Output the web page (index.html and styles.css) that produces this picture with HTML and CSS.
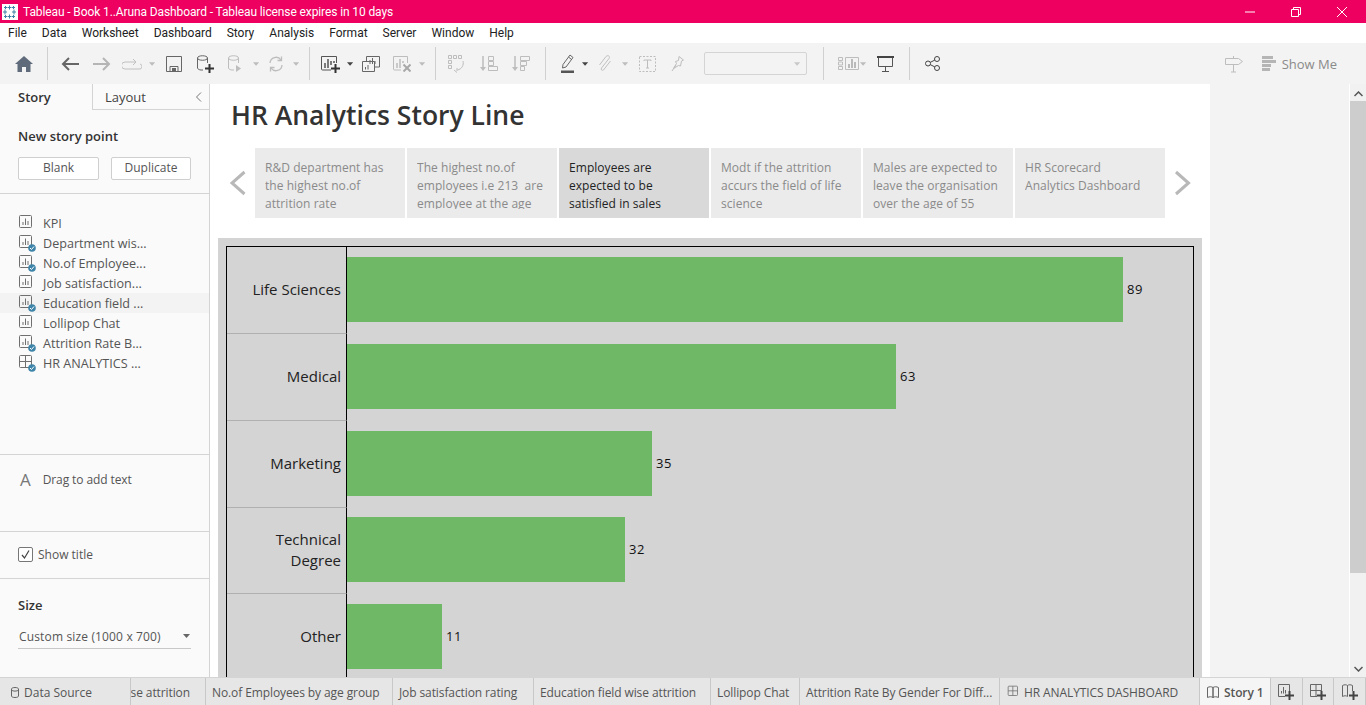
FILE: index.html
```html
<!DOCTYPE html>
<html lang="en">
<head>
    <meta charset="UTF-8">
    <title>Tableau - Book 1..Aruna Dashboard</title>
    <link rel="stylesheet" href="styles.css">
</head>
<body>
    <svg class="defs" width="0" height="0">
        <symbol id="sheet" viewBox="0 0 18 18">
            <rect x="1.5" y="1.5" width="12" height="12" rx="1" fill="none" stroke="#6f6f6f"/>
            <path d="M5 11V8M7.5 11V4.5M10 11V7" stroke="#6f6f6f" fill="none"/>
        </symbol>
        <symbol id="badge" viewBox="0 0 18 18">
            <circle cx="14" cy="14" r="3.800" fill="#3d84a8"/>
            <path d="M12 14l1.500 1.500L16 12.500" stroke="#fff" fill="none"/>
        </symbol>
        <symbol id="dash" viewBox="0 0 18 18">
            <rect x="1.5" y="1.5" width="12" height="12" rx="1" fill="none" stroke="#6f6f6f"/>
            <path d="M1.5 7.5h12M7.5 1.5v12" stroke="#6f6f6f" fill="none"/>
        </symbol>
        <symbol id="drop" viewBox="0 0 8 4">
            <path d="M0 0h7L3.5 4z"/>
        </symbol>
        <symbol id="plus" viewBox="0 0 9 9">
            <path d="M3.5 0h2v3.500h3.500v2H5.500V9h-2V5.500H0v-2h3.500z"/>
        </symbol>
    </svg>

    <header class="titlebar">
        <svg class="logo" width="16" height="16" viewBox="0 0 16 16">
            <rect width="16" height="16" fill="#fff"/>
            <path d="M7.500 1.500v4M5.500 3.500h4M7.500 10.500v4M5.500 12.500h4M3 5.500v5M1 8h4M12 5.500v5M10 8h4M3.500 2v3M2 3.500h3M11.500 2v3M10 3.500h3M3.500 11v3M2 12.500h3M11.500 11v3M10 12.500h3" stroke="#3f7ea6" fill="none"/>
        </svg>
        <span class="titlebar-text">Tableau - Book 1..Aruna Dashboard - Tableau license expires in 10 days</span>
        <div class="window-btns">
            <svg width="12" height="12" viewBox="0 0 12 12"><path d="M1 6h10" stroke="#fff"/></svg>
            <svg width="12" height="12" viewBox="0 0 12 12"><path d="M1.500 3.500h7v7h-7zM3.500 3.500v-2h7v7h-2" stroke="#fff" fill="none"/></svg>
            <svg width="12" height="12" viewBox="0 0 12 12"><path d="M1 1l10 10M11 1L1 11" stroke="#fff" fill="none"/></svg>
        </div>
    </header>

    <nav class="menubar">
        <span>File</span><span>Data</span><span>Worksheet</span><span>Dashboard</span><span>Story</span><span>Analysis</span><span>Format</span><span>Server</span><span>Window</span><span>Help</span>
    </nav>

    <div class="toolbar">
        <div class="tool w32"><svg width="18" height="16" viewBox="0 0 18 16"><path d="M9 0L0 8h2.500v8h4.500v-5h4v5h4.500V8H18z" fill="#5f6b7a"/></svg></div>
        <div class="sep"></div>
        <div class="tool w32"><svg width="18" height="14" viewBox="0 0 18 14"><path d="M8 1L2 7l6 6M2 7h16" stroke="#666" stroke-width="2" fill="none"/></svg></div>
        <div class="tool w32"><svg width="18" height="14" viewBox="0 0 18 14"><path d="M10 1l6 6-6 6M16 7H0" stroke="#b5b5b5" stroke-width="2" fill="none"/></svg></div>
        <div class="tool w28"><svg width="20" height="12" viewBox="0 0 20 12"><path d="M13 4H3a2.500 2.500 0 0 0 0 7h14a2.500 2.500 0 0 0 1-5M11 1l3 3-3 3" stroke="#c0c0c0" fill="none"/></svg></div>
        <div class="tool w12 dd off"><svg width="7" height="4"><use href="#drop"/></svg></div>
        <div class="tool w32"><svg width="16" height="16" viewBox="0 0 16 16"><path d="M.5.500h15v15H.5zM4 15.500v-5h8v5" stroke="#666" fill="none"/><path d="M6 12h4v3H6z" fill="#666"/></svg></div>
        <div class="tool w30"><svg width="18" height="18" viewBox="0 0 18 18"><path d="M1.500 3v10c0 1 2 2 3.500 2h2M11.500 3v5M1.500 3c0-3 10-3 10 0s-10 3-10 0z" stroke="#666" fill="none"/><use href="#plus" x="9" y="9" width="9" height="9" fill="#333"/></svg></div>
        <div class="tool w30"><svg width="16" height="18" viewBox="0 0 16 18"><path d="M1.500 3v10c0 1 2 2 3.500 2h2M11.500 3v5M1.500 3c0-3 10-3 10 0s-10 3-10 0z" stroke="#bdbdbd" fill="none"/><path d="M9 10l5 3.500L9 17z" fill="#bdbdbd"/></svg></div>
        <div class="tool w12 dd off"><svg width="7" height="4"><use href="#drop"/></svg></div>
        <div class="tool w28"><svg width="16" height="16" viewBox="0 0 16 16"><path d="M2 7a6 6 0 0 1 11-3M14 9a6 6 0 0 1-11 3M13.500.500v4h-4M2.500 15.500v-4h4" stroke="#bdbdbd" stroke-width="1.300" fill="none"/></svg></div>
        <div class="tool w12 dd off"><svg width="7" height="4"><use href="#drop"/></svg></div>
        <div class="sep"></div>
        <div class="tool w30"><svg width="20" height="18" viewBox="0 0 20 18"><path d="M10 15H1.500a1 1 0 0 1-1-1V1.500h15V8" stroke="#555" fill="none"/><path d="M4 13V8M7 13V4M10 10V6M13 8V6" stroke="#555" stroke-width="1.500"/><use href="#plus" x="10" y="9" width="9" height="9" fill="#333"/></svg></div>
        <div class="tool w8 dd"><svg width="7" height="4"><use href="#drop"/></svg></div>
        <div class="tool w34"><svg width="18" height="16" viewBox="0 0 18 16"><path d="M4.500 5V.500h13V11H13M.5 5.500h12v10H.5zM8 8V4M10.500 8V2M13 8V5M3.500 13.500V11M6 13.500V9" stroke="#666" fill="none"/></svg></div>
        <div class="tool w28"><svg width="18" height="17" viewBox="0 0 18 17"><path d="M8 15H1.500a1 1 0 0 1-1-1V1.500h14V8" stroke="#bdbdbd" fill="none"/><path d="M4 13V8M7 13V4M10 8V6" stroke="#bdbdbd" stroke-width="1.500"/><path d="M10.500 9.500l7 7M17.500 9.500l-7 7" stroke="#a8a8a8" stroke-width="2"/></svg></div>
        <div class="tool w12 dd off"><svg width="7" height="4"><use href="#drop"/></svg></div>
        <div class="sep"></div>
        <div class="tool w30"><svg width="18" height="18" viewBox="0 0 18 18"><path d="M.5.500h3v3h-3zM5.500.500h3v3h-3zM10.500.500h3v3h-3zM.5 5.500h3v3h-3zM.5 10.500h3v3h-3zM15 6c1 4-1 8-5.500 9M6 15l3 2.500M9 13v3" stroke="#bdbdbd" fill="none"/></svg></div>
        <div class="tool w34"><svg width="18" height="18" viewBox="0 0 18 18"><path d="M3 1v13" stroke="#bdbdbd" stroke-width="1.500"/><path d="M0 12l3 4 3-4z" fill="#bdbdbd"/><path d="M8.500 1.500h5v4h-5zM8.500 6.500h5v4h-5zM8.500 11.500h9v4h-9z" stroke="#bdbdbd" fill="none"/></svg></div>
        <div class="tool w30"><svg width="18" height="18" viewBox="0 0 18 18"><path d="M3 1v13" stroke="#bdbdbd" stroke-width="1.500"/><path d="M0 12l3 4 3-4z" fill="#bdbdbd"/><path d="M8.500 1.500h9v4h-9zM8.500 6.500h6v4h-6zM8.500 11.500h4v4h-4z" stroke="#bdbdbd" fill="none"/></svg></div>
        <div class="sep sep-wide"></div>
        <div class="tool w28"><svg width="14" height="19" viewBox="0 0 14 19"><path d="M9 1l3 2.500-7 9.500-3.500 1 .5-3.500zM7.500 3l3 2.500" stroke="#666" fill="none"/><path d="M0 16.500h13V19H0z" fill="#555"/></svg></div>
        <div class="tool w6 dd"><svg width="7" height="4"><use href="#drop"/></svg></div>
        <div class="tool w34"><svg width="14" height="17" viewBox="0 0 14 17"><path d="M11 3.500L3.500 13c-1 1.500 .5 3 2 2L12.500 6M11 3.500c1.500-2-1-4-3-2L1.500 10" stroke="#c0c0c0" fill="none"/></svg></div>
        <div class="tool w6 dd off"><svg width="7" height="4"><use href="#drop"/></svg></div>
        <div class="tool w38"><svg width="17" height="16" viewBox="0 0 17 16"><path d="M.5.500h16v15H.5z" stroke="#bdbdbd" stroke-dasharray="2 1.500" fill="none"/><path d="M5 5V4h7v1M8.500 4v8M7 12h3" stroke="#bdbdbd" fill="none"/></svg></div>
        <div class="tool w22"><svg width="13" height="16" viewBox="0 0 13 16"><path d="M8 .5l4.500 3.500-2 1-1 5-2-.5-5 3 3-5-1-2 3-1z M5 9l-4 6" stroke="#bdbdbd" fill="none"/></svg></div>
        <div class="combo"><svg width="7" height="4"><use href="#drop"/></svg></div>
        <div class="sep sep-cards"></div>
        <div class="tool w26"><svg width="21" height="13" viewBox="0 0 21 13"><path d="M.5.500h4v3h-4zM.5 5h4v3h-4zM.5 9.500h4v3h-4zM7.500.500h13v12h-13z" stroke="#bdbdbd" fill="none"/><path d="M11 11V7M14 11V2M17 11V5" stroke="#a8a8a8" stroke-width="1.500"/></svg></div>
        <div class="tool w4 dd off"><svg width="7" height="4"><use href="#drop"/></svg></div>
        <div class="tool w40"><svg width="17" height="16" viewBox="0 0 17 16"><path d="M0 1h17" stroke="#444" stroke-width="2"/><path d="M1.500 2v8.500h14V2M8.500 10.500v5M5 15.500h7" stroke="#555" fill="none"/></svg></div>
        <div class="sep sep-end"></div>
        <div class="tool w30"><svg width="15" height="15" viewBox="0 0 15 15"><circle cx="3" cy="7.500" r="2.500" fill="none" stroke="#444"/><circle cx="12" cy="3" r="2.500" fill="none" stroke="#444"/><circle cx="12" cy="12" r="2.500" fill="none" stroke="#444"/><path d="M5.200 6.400l4.600-2.300M5.200 8.600l4.600 2.300" stroke="#444"/></svg></div>
        <div class="toolbar-right">
            <svg width="18" height="18" viewBox="0 0 18 18"><path d="M.5 3.500h13l4 3-4 3H.5zM8.500 1v2.500M8.500 9.500V17M6 17h5" stroke="#bdbdbd" fill="none"/></svg>
            <div class="showme">
                <svg width="14" height="15" viewBox="0 0 14 15"><path d="M0 0h11v3H0zM0 4h14v3H0zM0 8h9v3H0zM0 12h8v3H0z" fill="#b5b5b5"/></svg>
                <span>Show Me</span>
            </div>
        </div>
    </div>

    <main class="main">
        <aside class="sidebar">
            <div class="side-tabs">
                <div class="side-tab active">Story</div>
                <div class="side-tab">Layout<svg class="collapse" width="7" height="10" viewBox="0 0 7 10"><path d="M6 .5L1.500 5 6 9.500" stroke="#777" fill="none"/></svg></div>
            </div>
            <section class="new-point">
                <h4>New story point</h4>
                <div class="btn-row">
                    <button class="btn">Blank</button>
                    <button class="btn">Duplicate</button>
                </div>
            </section>
            <section class="sheet-list">
                <div class="sheet"><svg width="18" height="18"><use href="#sheet"/></svg>KPI</div>
                <div class="sheet"><svg width="18" height="18"><use href="#sheet"/><use href="#badge"/></svg>Department wis...</div>
                <div class="sheet"><svg width="18" height="18"><use href="#sheet"/><use href="#badge"/></svg>No.of Employee...</div>
                <div class="sheet"><svg width="18" height="18"><use href="#sheet"/></svg>Job satisfaction...</div>
                <div class="sheet hover"><svg width="18" height="18"><use href="#sheet"/><use href="#badge"/></svg>Education field ...</div>
                <div class="sheet"><svg width="18" height="18"><use href="#sheet"/></svg>Lollipop Chat</div>
                <div class="sheet"><svg width="18" height="18"><use href="#sheet"/><use href="#badge"/></svg>Attrition Rate B...</div>
                <div class="sheet"><svg width="18" height="18"><use href="#dash"/><use href="#badge"/></svg>HR ANALYTICS ...</div>
            </section>
            <section class="drag-text">
                <span class="big-a">A</span>
                <span>Drag to add text</span>
            </section>
            <section class="show-title">
                <span class="check"><svg width="11" height="11" viewBox="0 0 11 11"><path d="M2 6l2.500 3L9 1.500" stroke="#444" stroke-width="1.200" fill="none"/></svg></span>
                <span>Show title</span>
            </section>
            <section class="size-box">
                <h4>Size</h4>
                <div class="size-select">
                    <span>Custom size (1000 x 700)</span>
                    <svg width="8" height="4"><use href="#drop"/></svg>
                </div>
            </section>
        </aside>

        <div class="story">
            <h1>HR Analytics Story Line</h1>
            <div class="points">
                <svg class="arrow" width="20" height="26" viewBox="0 0 20 26"><path d="M17.500 2L5 13l12.500 11" stroke="#b8b8b8" stroke-width="3" fill="none"/></svg>
                <div class="point"><p>R&amp;D department has the highest no.of attrition rate</p></div>
                <div class="point"><p>The highest no.of employees i.e 213&nbsp; are employee at the age group</p></div>
                <div class="point current"><p>Employees are expected to be satisfied in sales</p></div>
                <div class="point"><p>Modt if the attrition accurs the field of life science</p></div>
                <div class="point"><p>Males are expected to leave the organisation over the age of 55</p></div>
                <div class="point"><p>HR Scorecard<br>Analytics Dashboard</p></div>
                <svg class="arrow next" width="20" height="26" viewBox="0 0 20 26"><path d="M3 2l12.500 11L3 24" stroke="#b8b8b8" stroke-width="3" fill="none"/></svg>
            </div>
            <div class="canvas">
                <div class="chart">
                    <div class="row">
                        <div class="label">Life Sciences</div>
                        <div class="cell"><div class="bar" style="width:776px"></div><span class="value">89</span></div>
                    </div>
                    <div class="row">
                        <div class="label">Medical</div>
                        <div class="cell"><div class="bar" style="width:549px"></div><span class="value">63</span></div>
                    </div>
                    <div class="row">
                        <div class="label">Marketing</div>
                        <div class="cell"><div class="bar" style="width:305px"></div><span class="value">35</span></div>
                    </div>
                    <div class="row short">
                        <div class="label">Technical<br>Degree</div>
                        <div class="cell"><div class="bar" style="width:278px"></div><span class="value">32</span></div>
                    </div>
                    <div class="row">
                        <div class="label">Other</div>
                        <div class="cell"><div class="bar" style="width:95px"></div><span class="value">11</span></div>
                    </div>
                </div>
            </div>
        </div>

        <div class="gutter"></div>
        <div class="scrollbar">
            <svg width="9" height="6" viewBox="0 0 9 6"><path d="M.5 5L4.500 1l4 4" stroke="#555" stroke-width="1.500" fill="none"/></svg>
            <div class="thumb"></div>
            <svg width="9" height="6" viewBox="0 0 9 6"><path d="M.5 1l4 4 4-4" stroke="#555" stroke-width="1.500" fill="none"/></svg>
        </div>
    </main>

    <footer class="tabs">
        <div class="tab t-source"><svg width="8" height="11" viewBox="0 0 8 11"><path d="M.5 2v7c0 2 7 2 7 0V2c0-2-7-2-7 0zM.5 3c1 1.500 6 1.500 7 0" stroke="#666" fill="none"/></svg>Data Source</div>
        <div class="tab t-clip"><span>Department wise attrition</span></div>
        <div class="tab t-age">No.of Employees by age group</div>
        <div class="tab t-job">Job satisfaction rating</div>
        <div class="tab t-edu">Education field wise attrition</div>
        <div class="tab t-lol">Lollipop Chat</div>
        <div class="tab t-rate">Attrition Rate By Gender For Diff...</div>
        <div class="tab t-hr"><svg width="14" height="14"><use href="#dash"/></svg>HR ANALYTICS DASHBOARD</div>
        <div class="tab t-story"><svg width="12" height="12" viewBox="0 0 12 12"><path d="M.5 1.500c2-1 4-1 5.500 0v10c-1.500-1-3.500-1-5.500 0zM11.500 1.500c-2-1-4-1-5.500 0v10c1.500-1 3.500-1 5.500 0z" stroke="#666" fill="none"/></svg>Story 1</div>
        <div class="tab t-add"><svg width="16" height="16" viewBox="0 0 16 16"><path d="M7 12.500H.5V.5h11V7M3.500 9.500V7M5.500 9.500V3M7.500 9.500V6" stroke="#666" fill="none"/><use href="#plus" x="7" y="7" width="9" height="9" fill="#444"/></svg></div>
        <div class="tab t-add"><svg width="16" height="16" viewBox="0 0 16 16"><path d="M7 12.500H.5V.5h11V7M.5 6.500h11M6 .5v12" stroke="#666" fill="none"/><use href="#plus" x="7" y="7" width="9" height="9" fill="#444"/></svg></div>
        <div class="tab t-add"><svg width="16" height="16" viewBox="0 0 16 16"><path d="M.5 1.500c2-1 3.500-1 5 0v11c-1.500-1-3-1-5 0zM10.500 7V1.500c-2-1-3.500-1-5 0" stroke="#666" fill="none"/><use href="#plus" x="7" y="7" width="9" height="9" fill="#444"/></svg></div>
    </footer>
</body>
</html>
```

FILE: styles.css
```css
* {
    box-sizing: border-box;
}
html, body {
    margin: 0;
    height: 705px;
    overflow: hidden;
}
body {
    display: flex;
    flex-direction: column;
    font-family: "Open Sans", "Noto Sans", sans-serif;
    font-size: 12px;
    color: #333;
    background: #fff;
}
.defs {
    position: absolute;
}

/* window title */
.titlebar {
    display: flex;
    align-items: center;
    height: 23px;
    padding-left: 2px;
    background: #ee0060;
    color: #fff;
    font-family: Roboto, sans-serif;
    flex: none;
}
.titlebar-text {
    margin-left: 5px;
    letter-spacing: -0.11px;
}
.window-btns {
    margin-left: auto;
    display: flex;
    gap: 34px;
    padding-right: 18px;
}

/* menu */
.menubar {
    display: flex;
    align-items: center;
    gap: 15px;
    height: 20px;
    padding-left: 8px;
    color: #222;
    font-family: Roboto, sans-serif;
    flex: none;
}

/* toolbar */
.toolbar {
    display: flex;
    align-items: center;
    height: 41px;
    padding-left: 8px;
    background: #f3f3f3;
    flex: none;
}
.tool {
    display: flex;
    align-items: center;
    justify-content: center;
    flex: none;
    height: 24px;
}
.dd svg {
    fill: #444;
    overflow: visible;
}
.dd.off svg {
    fill: #bdbdbd;
}
.w4 { width: 4px; }
.w6 { width: 6px; }
.w8 { width: 8px; }
.w12 { width: 12px; }
.w22 { width: 22px; }
.w26 { width: 26px; }
.w28 { width: 28px; }
.w30 { width: 30px; }
.w32 { width: 32px; }
.w34 { width: 34px; }
.w38 { width: 38px; }
.w40 { width: 40px; }
.sep {
    flex: none;
    width: 1px;
    height: 33px;
    margin: 0 6px 0 7px;
    background: #d0d0d0;
}
.sep-wide {
    margin: 0 8px 0 9px;
}
.sep-cards {
    margin: 0 11px 0 0;
}
.sep-end {
    margin: 0 7px 0 4px;
}
.combo {
    flex: none;
    display: flex;
    align-items: center;
    justify-content: flex-end;
    width: 103px;
    height: 23px;
    margin: 0 16px;
    padding-right: 5px;
    border: 1px solid #d4d4d4;
    border-radius: 2px;
    fill: #c8c8c8;
}
.toolbar-right {
    margin-left: auto;
    display: flex;
    align-items: center;
    gap: 19px;
    padding-right: 29px;
}
.showme {
    display: flex;
    align-items: center;
    gap: 6px;
    font-size: 13px;
    color: #8a8a8a;
}

/* main area */
.main {
    display: flex;
    flex: 1;
    min-height: 0;
    overflow: hidden;
}
.sidebar {
    flex: none;
    display: flex;
    flex-direction: column;
    width: 210px;
    background: #fafafa;
    border-right: 1px solid #d4d4d4;
}
.sidebar section {
    border-bottom: 1px solid #d4d4d4;
}
.sidebar h4 {
    margin: 0;
    font-size: 13px;
    font-weight: 600;
    color: #333;
}
.side-tabs {
    display: flex;
    height: 26px;
    flex: none;
    font-size: 13px;
}
.side-tab {
    display: flex;
    align-items: center;
    flex: 1;
    padding-left: 12px;
    border-left: 1px solid #d4d4d4;
    border-bottom: 1px solid #d4d4d4;
    color: #444;
}
.side-tab.active {
    flex: none;
    width: 92px;
    padding-left: 18px;
    border: 0;
    font-weight: 600;
    color: #333;
}
.collapse {
    margin-left: auto;
    margin-right: 7px;
}
.new-point {
    height: 84px;
    padding: 17px 18px 0;
}
.btn-row {
    display: flex;
    gap: 12px;
    margin-top: 12px;
}
.btn {
    width: 81px;
    height: 23px;
    padding: 0 0 2px;
    border: 1px solid #cfcfcf;
    border-radius: 2px;
    background: #fff;
    font: inherit;
    color: #555;
}
.btn + .btn {
    width: 80px;
}
.sheet-list {
    height: 261px;
    padding-top: 19px;
}
.sheet {
    display: flex;
    align-items: center;
    gap: 7px;
    height: 20px;
    padding-left: 18px;
    font-size: 12.6px;
    color: #555;
}
.sheet svg {
    flex: none;
}
.sheet.hover {
    background: #f3f3f3;
}
.drag-text {
    display: flex;
    align-items: center;
    gap: 12px;
    height: 77px;
    padding: 0 0 27px 20px;
    letter-spacing: -0.1px;
    color: #555;
}
.big-a {
    font-size: 17px;
    color: #777;
}
.show-title {
    display: flex;
    align-items: center;
    gap: 5px;
    height: 47px;
    padding: 0 0 2px 18px;
    color: #555;
}
.check {
    display: flex;
    align-items: center;
    justify-content: center;
    width: 15px;
    height: 15px;
    border: 1px solid #777;
    border-radius: 2px;
    background: #fff;
}
.sidebar .size-box {
    padding: 17px 18px 0;
    border: 0;
}
.size-select {
    display: flex;
    align-items: center;
    justify-content: space-between;
    height: 25px;
    margin-top: 10px;
    padding-left: 1px;
    border-bottom: 1px solid #c8c8c8;
    letter-spacing: 0.15px;
    color: #555;
}
.size-select svg {
    fill: #666;
}

/* story */
.story {
    flex: none;
    width: 1000px;
    background: #fff;
}
.story h1 {
    margin: 0;
    height: 64px;
    padding: 12px 0 0 21px;
    font-size: 26.5px;
    line-height: 38px;
    font-weight: 600;
    color: #333;
}
.points {
    display: flex;
    align-items: center;
    gap: 2px;
    height: 70px;
    padding-left: 17px;
}
.arrow {
    flex: none;
    margin-right: 6px;
}
.arrow.next {
    margin: 0 0 0 6px;
}
.point {
    flex: none;
    width: 150px;
    height: 70px;
    padding: 11px 10px 0;
    background: #ebebeb;
    color: #8a8a8a;
}
.point p {
    margin: 0;
    height: 50px;
    overflow: hidden;
    line-height: 18px;
    letter-spacing: 0.05px;
}
.point.current {
    background: #d9d9d9;
    color: #222;
}
.canvas {
    margin: 20px 8px 0;
    padding: 8px 8px 0;
    height: 439px;
    background: #d4d4d4;
}
.chart {
    border: 1px solid #000;
    border-bottom: 0;
    height: 100%;
    overflow: hidden;
}
.row {
    display: flex;
    height: 87px;
}
.row.short {
    height: 86px;
}
.label {
    flex: none;
    display: flex;
    align-items: center;
    justify-content: flex-end;
    text-align: right;
    width: 120px;
    padding: 0 5px 2px 0;
    border-bottom: 1px solid #b0b0b0;
    border-right: 1px solid #000;
    font-size: 15px;
    font-weight: 500;
    line-height: 21px;
    color: #222;
}
.cell {
    display: flex;
    align-items: flex-start;
    flex: 1;
    gap: 4px;
    padding-top: 10px;
    font-size: 13px;
    letter-spacing: 0.5px;
    color: #111;
}
.row.short .cell {
    padding-top: 9px;
}
.value {
    line-height: 64px;
}
.bar {
    height: 65px;
    background: #6fb966;
}
.gutter {
    flex: 1;
    background: #f3f3f3;
}
.scrollbar {
    flex: none;
    display: flex;
    flex-direction: column;
    align-items: center;
    justify-content: space-between;
    width: 17px;
    padding: 7px 0 5px;
    border-left: 1px solid #fff;
    background: #f1f1f1;
}
.thumb {
    width: 16px;
    height: 472px;
    margin: 4px 0 auto;
    background: #cdcdcd;
}

/* sheet tabs */
.tabs {
    display: flex;
    flex: none;
    height: 28px;
    border-top: 1px solid #d4d4d4;
    background: #e6e6e6;
}
.tab {
    display: flex;
    align-items: center;
    flex: none;
    gap: 3px;
    padding: 1px 0 0 6px;
    border-right: 1px solid #c8c8c8;
    letter-spacing: -0.1px;
    color: #555;
    white-space: nowrap;
    overflow: hidden;
}
.t-source { width: 131px; padding-left: 11px; gap: 5px; letter-spacing: 0; }
.t-clip { width: 75px; padding-right: 15px; padding-left: 0; justify-content: flex-end; }
.t-age { width: 187px; }
.t-job { width: 141px; }
.t-edu { width: 177px; }
.t-lol { width: 89px; }
.t-rate { width: 200px; }
.t-hr { width: 200px; padding-left: 7px; }
.t-story {
    width: 71px;
    padding-left: 7px;
    background: #f5f5f5;
    font-weight: 600;
    gap: 5px;
}
.t-add {
    flex: 1;
    justify-content: center;
    padding: 0;
}
```
